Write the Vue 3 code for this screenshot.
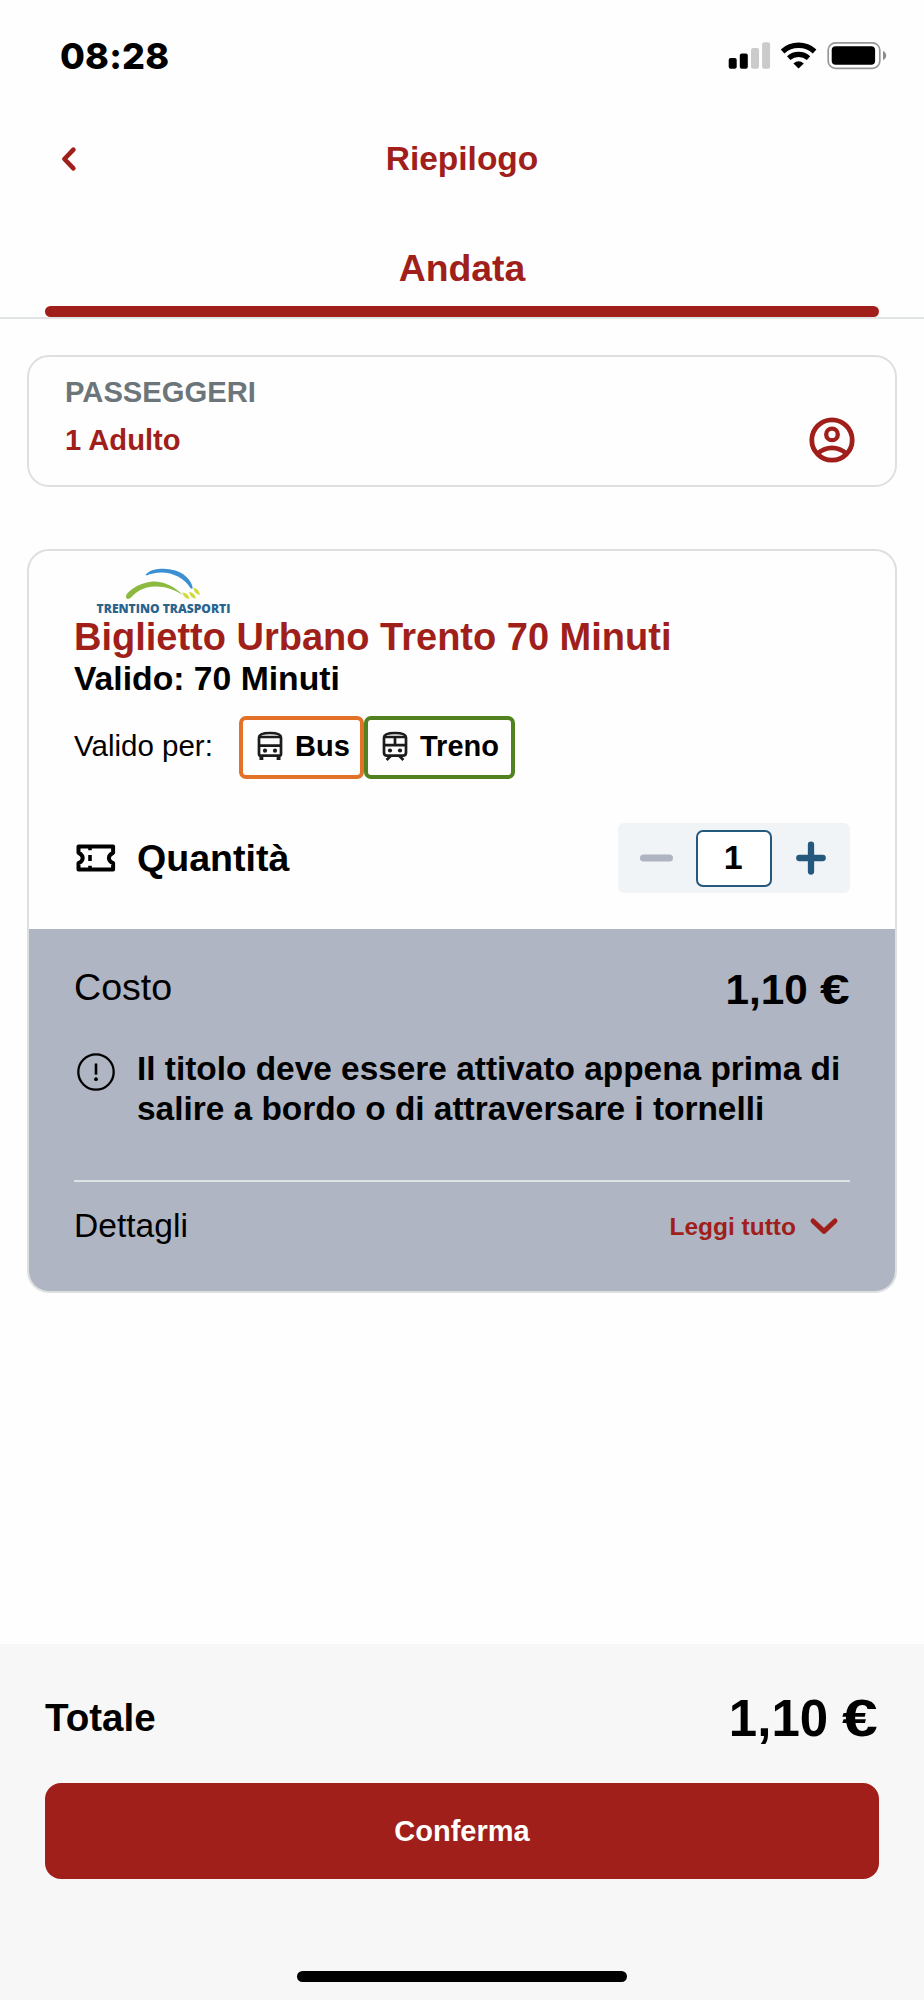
<script setup>
import { ref, computed } from 'vue'

const quantity = ref(1)
const unitPrice = 1.1
const price = computed(() => (quantity.value * unitPrice).toFixed(2).replace('.', ','))

function decrease() {
  if (quantity.value > 1) quantity.value--
}
function increase() {
  quantity.value++
}
</script>

<template>
  <div class="screen">
    <div class="status">
      <span class="clock">08:28</span>
      <svg class="status-icons" width="160" height="32" viewBox="728 40 160 32">
        <rect x="728.7" y="58" width="8" height="10.8" rx="2" />
        <rect x="739.8" y="53.4" width="8" height="15.4" rx="2" />
        <rect x="751" y="48" width="8" height="20.8" rx="2" fill="#cbcbcb" />
        <rect x="762.1" y="42.3" width="8" height="26.5" rx="2" fill="#cbcbcb" />
        <g fill="none" stroke="#000">
          <path d="M782.6 51.4 A24 24 0 0 1 814.6 51.4" stroke-width="5.4" />
          <path d="M788.7 58.1 A15 15 0 0 1 808.5 58.1" stroke-width="5.2" />
        </g>
        <path d="M793.4 63.6 Q798.6 59 803.8 63.6 L798.6 68.6 Z" />
        <rect x="828.2" y="42.8" width="51.6" height="25.6" rx="7.5" fill="none" stroke="#969696" stroke-width="1.7" />
        <rect x="831.7" y="46.2" width="43.4" height="18.6" rx="4" />
        <path d="M883 51 Q886.2 52.5 886.2 55.6 Q886.2 58.7 883 60.2 Z" fill="#8c8c8c" />
      </svg>
    </div>

    <header class="nav">
      <svg class="back" width="16" height="26" viewBox="0 0 16 26">
        <path d="M12.4 3.6 L3.4 13 L12.4 22.4" fill="none" stroke="currentColor" stroke-width="4.6" stroke-linecap="round" stroke-linejoin="round" />
      </svg>
      <h1>Riepilogo</h1>
    </header>

    <div class="tabs">
      <div class="tab">Andata</div>
      <div class="tab-bar"></div>
    </div>

    <section class="card passengers">
      <div class="label">PASSEGGERI</div>
      <div class="passenger-row">
        <span>1 Adulto</span>
        <svg width="46" height="46" viewBox="-23 -23 46 46" fill="none" stroke="currentColor">
          <circle r="20.2" stroke-width="4.8" />
          <circle cy="-5.6" r="5.8" stroke-width="4.3" />
          <path d="M-14.4 13.4 Q-7.5 7.9 0 7.9 Q7.5 7.9 14.4 13.4" stroke-width="4.6" />
        </svg>
      </div>
    </section>

    <section class="card ticket">
      <div class="ticket-top">
        <svg class="logo" width="150" height="52" viewBox="90 565 150 52">
          <path d="M145.7 574.8 C149 570.3 156 568.8 163.5 568.8 C179 569 191 577 192.8 588.2 C191.8 589 190.8 588.6 190.2 587.8 C184 578.3 173.5 572.8 161.5 572.6 C155.5 572.6 150.5 574 146.6 575.6 Z" fill="#3b8fd3" />
          <path d="M126 596.4 C126.2 592 140 581.6 155 581.6 C166.5 582 176 588.3 182.6 594.8 C173.5 589.8 166 586.4 155 586.6 C143 587 136 592 131 597.600 C128.800 599.600 126 599.400 126 596.400 Z" fill="#8cba41" />
          <g fill="#d0da3a">
            <path d="M182.300 592.600 Q188.600 593 189.400 599 Q184 598.900 182.300 592.600 Z" />
            <path d="M189 592 Q195 592.500 195.900 598.600 Q190.400 598.300 189 592 Z" />
            <path d="M193.300 587.800 Q199 588.800 200 595 Q194.400 594.300 193.300 587.800 Z" />
          </g>
          <text x="96.600" y="613" textLength="133.800" lengthAdjust="spacingAndGlyphs">TRENTINO TRASPORTI</text>
        </svg>
        <h2>Biglietto Urbano Trento 70 Minuti</h2>
        <h3>Valido: 70 Minuti</h3>

        <div class="valid-row">
          <span class="valid-label">Valido per:</span>
          <span class="badge bus">
            <svg width="26" height="30" viewBox="0 0 26 30" fill="none" stroke="#1c1c1c" stroke-width="2.700">
              <path d="M2 23.600 V6.500 Q2 2 13 2 Q24 2 24 6.500 V23.600 Q24 24.600 23 24.600 H3 Q2 24.600 2 23.600 Z" />
              <path d="M2 6 H24 M2 14.700 H24" />
              <path d="M4.400 24.600 V29 M21.600 24.600 V29" stroke-width="3.900" />
              <circle cx="8" cy="19.700" r="2.100" fill="#1c1c1c" stroke="none" />
              <circle cx="18" cy="19.700" r="2.100" fill="#1c1c1c" stroke="none" />
            </svg>
            Bus
          </span>
          <span class="badge train">
            <svg width="26" height="30" viewBox="0 0 26 30" fill="none" stroke="#1c1c1c" stroke-width="2.700">
              <path d="M2 21.400 V6.500 Q2 2 13 2 Q24 2 24 6.500 V21.400 Q24 24.600 20.800 24.600 H5.200 Q2 24.600 2 21.400 Z" />
              <path d="M2 6 H24 M2 14.200 H24 M13 6 V14.200" />
              <path d="M8.600 25 L4.600 29 M17.400 25 L21.400 29" stroke-width="2.700" />
              <circle cx="8" cy="19.500" r="2.100" fill="#1c1c1c" stroke="none" />
              <circle cx="18" cy="19.500" r="2.100" fill="#1c1c1c" stroke="none" />
            </svg>
            Treno
          </span>
        </div>

        <div class="quantity-row">
          <svg class="ticket-icon" width="40" height="28" viewBox="0 0 40 28" fill="none" stroke="#000">
            <path d="M2.500 2.600 H37.100 V8.800 Q32.900 10.600 32.900 14 Q32.900 17.400 37.100 19.200 V25.400 H2.500 V19.200 Q6.700 17.400 6.700 14 Q6.700 10.600 2.500 8.800 Z" stroke-width="4" stroke-linejoin="round" />
            <path d="M14 3 V6.200 M14 11 V17 M14 21.800 V25" stroke-width="3.600" />
          </svg>
          <span class="quantity-label">Quantità</span>
          <div class="stepper">
            <button aria-label="Meno" @click="decrease">
              <svg width="34" height="36" viewBox="0 0 34 36">
                <path d="M3.500 18 H29.500" stroke="#aeb4c1" stroke-width="7" stroke-linecap="round" />
              </svg>
            </button>
            <span class="count">{{ quantity }}</span>
            <button aria-label="Più" @click="increase">
              <svg width="34" height="36" viewBox="0 0 34 36">
                <path d="M5.300 18 H28.700 M17 4.600 V31.600" stroke="#24587d" stroke-width="6.300" stroke-linecap="round" />
              </svg>
            </button>
          </div>
        </div>
      </div>

      <div class="ticket-bottom">
        <div class="cost-row">
          <span class="cost-label">Costo</span>
          <span class="price">{{ price }} <span class="euro">€</span></span>
        </div>
        <div class="notice">
          <svg width="38" height="38" viewBox="-19 -19 38 38" fill="none" stroke="#000">
            <circle r="17.700" stroke-width="2.300" />
            <path d="M0 -8.500 V2.600" stroke-width="2.600" />
            <circle cy="7.200" r="1.900" fill="#000" stroke="none" />
          </svg>
          <p>Il titolo deve essere attivato appena prima di<br />salire a bordo o di attraversare i tornelli</p>
        </div>
        <div class="details">
          <span>Dettagli</span>
          <a class="more">
            Leggi tutto
            <svg width="30" height="20" viewBox="0 0 30 20">
              <path d="M4 4 L15 14.400 L26 4" fill="none" stroke="currentColor" stroke-width="5" stroke-linecap="round" stroke-linejoin="round" />
            </svg>
          </a>
        </div>
      </div>
    </section>

    <footer class="footer">
      <div class="total-row">
        <span class="total-label">Totale</span>
        <span class="total-price">{{ price }} <span class="euro">€</span></span>
      </div>
      <button class="confirm">Conferma</button>
      <div class="home-bar"></div>
    </footer>
  </div>
</template>

<style>
body {
  margin: 0;
  background: #fefefe;
}
</style>

<style scoped>
.screen {
  width: 924px;
  height: 2000px;
  display: flex;
  flex-direction: column;
  box-sizing: border-box;
  background: #fefefe;
  color: #000;
  font-family: "Liberation Sans", Arial, sans-serif;
  overflow: hidden;
  white-space: nowrap;
}
h1, h2, h3, p {
  margin: 0;
}
svg {
  display: block;
  flex: none;
}
button {
  border: 0;
  padding: 0;
  background: none;
  font-family: inherit;
}

.status {
  height: 112px;
  display: flex;
  align-items: center;
  justify-content: space-between;
  padding: 0 36px 0 60px;
}
.clock {
  font: 800 36px/40px Inter, sans-serif;
  letter-spacing: 0.2px;
}

.nav {
  height: 93px;
  display: grid;
  grid-template-columns: 60px 1fr 60px;
  align-items: center;
  color: #a01f1a;
}
.back {
  justify-self: end;
  margin-right: -17px;
}
.nav h1 {
  text-align: center;
  font-size: 33.5px;
  line-height: 40px;
}

.tabs {
  height: 112px;
  border-bottom: 2px solid #e1e4e5;
  padding: 0 45px;
  color: #a01f1a;
}
.tab {
  padding-top: 43px;
  height: 58px;
  line-height: 40px;
  font-size: 37.4px;
  font-weight: 700;
  text-align: center;
}
.tab-bar {
  height: 11px;
  border-radius: 6px;
  background: #a01f1a;
}

.card {
  margin: 0 27px;
  box-sizing: border-box;
  border: 2px solid #dedfdf;
  border-radius: 22px;
}
.passengers {
  margin-top: 36px;
  height: 132px;
  padding: 19px 40px 0 36px;
  font-size: 29.2px;
  font-weight: 700;
  line-height: 32px;
}
.label {
  color: #6c757a;
}
.passenger-row {
  height: 32px;
  margin-top: 16px;
  display: flex;
  align-items: center;
  justify-content: space-between;
  color: #a01f1a;
}

.ticket {
  margin-top: 62px;
  height: 744px;
  overflow: hidden;
  display: flex;
  flex-direction: column;
}
.ticket-top {
  height: 378px;
  flex: none;
  box-sizing: border-box;
  padding: 14px 45px 0;
}
.logo {
  margin-left: 16px;
}
.logo text {
  font: 800 12.4px "Open Sans", "Noto Sans", sans-serif;
  fill: #29648f;
}
.ticket h2 {
  font-size: 38px;
  line-height: 40px;
  color: #a01f1a;
}
.ticket h3 {
  margin-top: 1px;
  font-size: 33.7px;
  line-height: 40px;
}
.valid-row {
  margin-top: 17px;
  height: 64px;
  display: flex;
  align-items: center;
}
.valid-label {
  width: 165px;
  font-size: 29.5px;
  line-height: 34px;
  padding-bottom: 2px;
}
.badge {
  box-sizing: border-box;
  height: 63px;
  border: 4.5px solid;
  border-radius: 7px;
  padding-bottom: 2px;
  display: flex;
  align-items: center;
  font-size: 29px;
  font-weight: 700;
  gap: 12px;
}
.bus {
  width: 125px;
  padding-left: 14px;
  border-color: #e37228;
}
.train {
  width: 151px;
  padding-left: 14px;
  border-color: #52811f;
}
.quantity-row {
  margin-top: 44px;
  height: 70px;
  display: flex;
  align-items: center;
}
.ticket-icon {
  margin-left: 2px;
}
.quantity-label {
  margin-left: 21px;
  font-size: 37.6px;
  line-height: 40px;
  font-weight: 700;
}
.stepper {
  margin-left: auto;
  width: 232px;
  height: 70px;
  border-radius: 6px;
  background: #f0f4f7;
  display: grid;
  grid-template-columns: 77.5px 76.5px 78px;
  align-items: center;
}
.stepper button {
  display: flex;
  justify-content: center;
}
.count {
  box-sizing: border-box;
  height: 57px;
  border: 2px solid #24587d;
  border-radius: 7px;
  background: #fff;
  font-size: 34px;
  font-weight: 700;
  line-height: 51px;
  padding-right: 1px;
  text-align: center;
}

.ticket-bottom {
  flex: 1;
  background: #afb5c2;
  padding: 0 45px;
}
.cost-row {
  height: 119px;
  display: flex;
  justify-content: space-between;
}
.cost-label {
  padding-top: 38px;
  font-size: 37.6px;
  line-height: 40px;
}
.price {
  padding-top: 41px;
  font-size: 42.3px;
  line-height: 40px;
  font-weight: 700;
}
.euro {
  display: inline-block;
  width: 0.72em;
  transform: scaleX(1.26);
  transform-origin: left;
}
.notice {
  display: flex;
  height: 132px;
  border-bottom: 2px solid #e0e3e4;
}
.notice svg {
  margin: 5px 22px 0 3px;
}
.notice p {
  padding-top: 1px;
  font-size: 33.4px;
  font-weight: 700;
  line-height: 39.5px;
}
.details {
  height: 88px;
  display: flex;
  align-items: center;
  justify-content: space-between;
  font-size: 33.6px;
}
.more {
  display: flex;
  align-items: center;
  gap: 13px;
  margin-right: 11px;
  padding-top: 1px;
  color: #a01f1a;
  font-size: 24.5px;
  font-weight: 700;
}

.footer {
  margin-top: auto;
  height: 356px;
  box-sizing: border-box;
  background: #f7f7f7;
  padding: 0 45px;
  display: flex;
  flex-direction: column;
}
.total-row {
  height: 139px;
  display: flex;
  justify-content: space-between;
  font-weight: 700;
}
.total-label {
  padding-top: 54px;
  font-size: 38.6px;
  line-height: 40px;
}
.total-price {
  padding-top: 50px;
  font-size: 51px;
  line-height: 50px;
}
.confirm {
  height: 96px;
  flex: none;
  border-radius: 16px;
  background: #a01f1a;
  color: #fff;
  font-size: 29px;
  font-weight: 700;
}
.home-bar {
  align-self: center;
  margin-top: 92px;
  width: 330px;
  height: 11px;
  border-radius: 6px;
  background: #000;
}
</style>
